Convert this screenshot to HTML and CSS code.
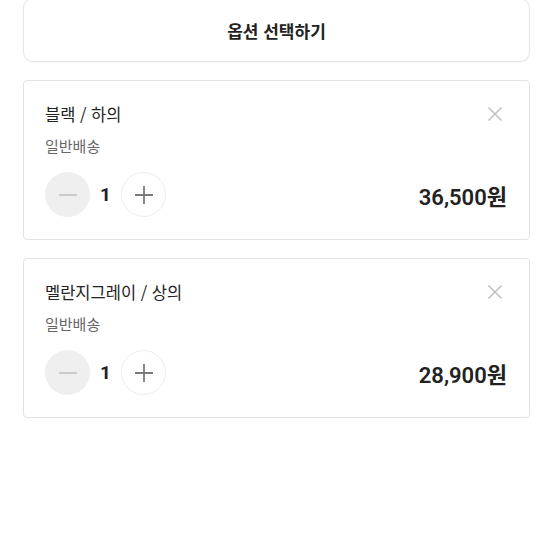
FILE: index.html
```html
<!DOCTYPE html>
<html lang="ko">
<head>
<meta charset="utf-8">
<link rel="stylesheet" href="styles.css">
</head>
<body>
<div class="page">
  <button class="select-btn">옵션 선택하기</button>

  <div class="item">
    <div class="item-head">
      <div class="item-name">블랙 / 하의</div>
      <svg class="close" width="16" height="16" viewBox="0 0 16 16"><path d="M1.5 1.5L14.5 14.5M14.5 1.5L1.5 14.5" stroke="#c2c2c2" stroke-width="1.6" fill="none"/></svg>
    </div>
    <div class="item-ship">일반배송</div>
    <div class="item-foot">
      <div class="qty">
        <span class="qbtn minus"><svg width="20" height="20" viewBox="0 0 20 20"><path d="M1 10H19" stroke="#cacaca" stroke-width="2"/></svg></span>
        <span class="qnum">1</span>
        <span class="qbtn plus"><svg width="20" height="20" viewBox="0 0 20 20"><path d="M1 10H19M10 1V19" stroke="#7a7a7a" stroke-width="1.8"/></svg></span>
      </div>
      <div class="price">36,500원</div>
    </div>
  </div>

  <div class="item">
    <div class="item-head">
      <div class="item-name">멜란지그레이 / 상의</div>
      <svg class="close" width="16" height="16" viewBox="0 0 16 16"><path d="M1.5 1.5L14.5 14.5M14.5 1.5L1.5 14.5" stroke="#c2c2c2" stroke-width="1.6" fill="none"/></svg>
    </div>
    <div class="item-ship">일반배송</div>
    <div class="item-foot">
      <div class="qty">
        <span class="qbtn minus"><svg width="20" height="20" viewBox="0 0 20 20"><path d="M1 10H19" stroke="#cacaca" stroke-width="2"/></svg></span>
        <span class="qnum">1</span>
        <span class="qbtn plus"><svg width="20" height="20" viewBox="0 0 20 20"><path d="M1 10H19M10 1V19" stroke="#7a7a7a" stroke-width="1.8"/></svg></span>
      </div>
      <div class="price">28,900원</div>
    </div>
  </div>
</div>
</body>
</html>
```

FILE: styles.css
```css
* { box-sizing: border-box; }
html, body { margin: 0; padding: 0; background: #fff; }
body {
  font-family: "Noto Sans CJK KR", "Noto Sans", sans-serif;
  color: #222;
}
.page {
  padding: 0 23px;
  display: flex;
  flex-direction: column;
  gap: 18px;
}
.select-btn {
  margin-top: -2px;
  height: 64px;
  width: 100%;
  background: #fff;
  border: 1px solid #e6e6e6;
  border-radius: 10px;
  font-family: inherit;
  font-size: 17px;
  font-weight: 600;
  color: #222;
  box-shadow: 0 1px 2px rgba(0,0,0,0.04);
}
.item {
  height: 160px;
  border: 1px solid #e3e3e3;
  border-radius: 4px;
  padding: 21px 22px 0 21px;
  display: flex;
  flex-direction: column;
}
.item-head {
  display: flex;
  justify-content: space-between;
  align-items: center;
  height: 24px;
}
.item-name {
  font-size: 16.5px;
  line-height: 22px;
  color: #222;
}
.close { margin-right: 4px; }
.item-ship {
  margin-top: 10px;
  font-size: 15px;
  line-height: 20px;
  color: #666;
}
.item-foot {
  margin-top: 16px;
  display: flex;
  justify-content: space-between;
  align-items: center;
}
.qty {
  display: flex;
  align-items: center;
}
.qbtn {
  width: 45px;
  height: 45px;
  border-radius: 50%;
  display: flex;
  align-items: center;
  justify-content: center;
}
.minus { background: #efefef; }
.plus { background: #fff; border: 1px solid #ededed; }
.qnum {
  width: 31px;
  text-align: center;
  font-family: Roboto, "Noto Sans CJK KR", sans-serif;
  font-size: 19px;
  font-weight: 700;
  color: #222;
}
.price {
  font-family: Roboto, "Noto Sans CJK KR", sans-serif;
  font-size: 22px;
  font-weight: 600;
  color: #222;
}
```
